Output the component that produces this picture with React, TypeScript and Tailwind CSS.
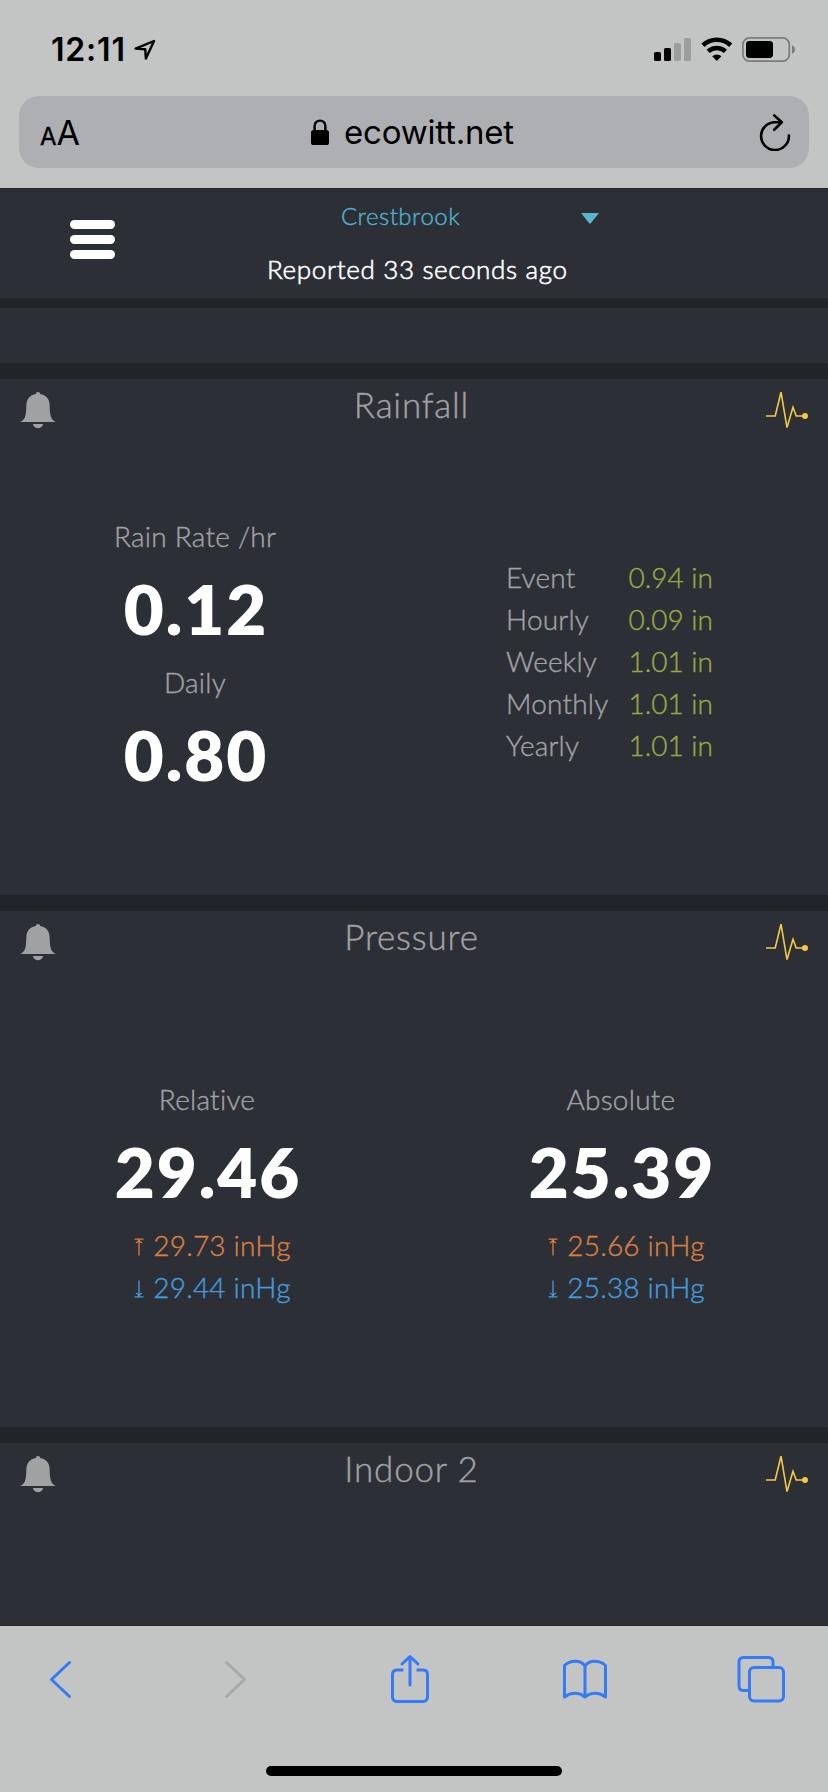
import type { ReactNode } from 'react'

const RAIN_TOTALS = [
  { label: 'Event', value: '0.94 in' },
  { label: 'Hourly', value: '0.09 in' },
  { label: 'Weekly', value: '1.01 in' },
  { label: 'Monthly', value: '1.01 in' },
  { label: 'Yearly', value: '1.01 in' },
]

const PRESSURES = [
  { label: 'Relative', value: '29.46', high: '29.73 inHg', low: '29.44 inHg' },
  { label: 'Absolute', value: '25.39', high: '25.66 inHg', low: '25.38 inHg' },
]

function StatusBar() {
  return (
    <div className="flex h-24 items-start justify-between pl-[51px] pr-[33px] pt-[33px]">
      <div className="flex items-start">
        <span className="w-[83px] text-[32px] font-semibold leading-[33px] tracking-[0.8px]">
          12:11
        </span>
        <svg width="22" height="22" viewBox="0 0 22 22" className="mt-[6px]">
          <path
            d="M1.6 9.6 L20 2 L11.9 19.6 L11.2 10.2 Z"
            fill="none"
            stroke="#000"
            strokeWidth="2.4"
            strokeLinejoin="round"
          />
        </svg>
      </div>
      <div className="flex items-start">
        <svg width="37" height="23" viewBox="0 0 37 23" className="mt-[5px]">
          <rect x="0" y="14" width="7" height="9" rx="1.6" />
          <rect x="10" y="10" width="7" height="13" rx="1.6" />
          <rect x="20" y="5" width="7" height="18" rx="1.6" fill="#9c9e9d" />
          <rect x="30" y="0" width="7" height="23" rx="1.6" fill="#9c9e9d" />
        </svg>
        <svg width="32" height="24" viewBox="0 0 32 24" className="ml-[10px] mt-1">
          <g fill="none" stroke="#000" strokeWidth="4.6">
            <path d="M1.9 8.2 A20.4 20.4 0 0 1 29.7 8.2" />
            <path d="M7.2 14.4 A12.6 12.6 0 0 1 24.4 14.4" />
          </g>
          <path d="M15.8 24 L11.2 19.3 A6.6 6.6 0 0 1 20.4 19.3 Z" />
        </svg>
        <svg width="53" height="25" viewBox="0 0 53 25" className="ml-[9px] mt-1">
          <rect x="0.9" y="0.9" width="46.4" height="23.2" rx="6.5" fill="none" stroke="#7b7d7c" strokeWidth="1.8" />
          <rect x="4" y="4" width="27" height="17" rx="3.4" />
          <path d="M50 8.2 Q53 9.4 53 12.5 Q53 15.6 50 16.8 Z" fill="#7b7d7c" />
        </svg>
      </div>
    </div>
  )
}

function AddressBar() {
  return (
    <div className="mx-[19px] flex h-[72px] items-start rounded-[20px] bg-[#aeafb2]">
      <div className="flex w-[292px] items-baseline pl-[21px]">
        <span className="text-[24px] leading-[72px] [-webkit-text-stroke:0.4px]">A</span>
        <span className="text-[34px] leading-[73px] tracking-[-1px]">A</span>
      </div>
      <svg width="18" height="26" viewBox="0 0 18 26" className="mt-[23px]">
        <rect x="0" y="11" width="18" height="15" rx="2.6" />
        <path d="M3.6 12 V7 a5.4 5.4 0 0 1 10.8 0 V12" fill="none" stroke="#000" strokeWidth="2.4" />
      </svg>
      <span className="ml-[15px] w-[400px] text-[33px] leading-[72px] tracking-[-0.2px]">
        ecowitt.net
      </span>
      <svg width="32" height="38" viewBox="0 0 32 38" className="mt-[17px] ml-[15px]">
        <g fill="none" stroke="#000" strokeWidth="2.6" strokeLinecap="round" strokeLinejoin="round">
          <path d="M22 9.2 H16 A13.9 13.9 0 1 0 29.9 22.6" />
          <path d="M15.2 2.4 L22.8 9.3 L15.2 16.8" />
        </g>
      </svg>
    </div>
  )
}

function BellIcon() {
  return (
    <svg width="36" height="37" viewBox="0 0 36 37" fill="#a0a1a3">
      <path d="M18 0 C19.3 0 20.1 .8 20.2 2 C26 3 29.4 7 29.6 12.5 C29.8 18 29.9 22 31 25 C32 27.4 33.6 29 36 30 H0 C2.4 29 4 27.4 5 25 C6.1 22 6.2 18 6.4 12.5 C6.6 7 10 3 15.8 2 C15.9 .8 16.7 0 18 0 Z" />
      <path d="M12.8 32 H23.2 C22.6 34.4 20.6 36.2 18 36.2 C15.4 36.2 13.4 34.4 12.8 32 Z" />
    </svg>
  )
}

function PulseIcon() {
  return (
    <svg width="42" height="38" viewBox="0 0 42 38">
      <path
        d="M0 25 H9.2 L15 1.2 L21 36.6 L27 16.2 L30.2 25 H39"
        fill="none"
        stroke="#f5c945"
        strokeWidth="1.6"
      />
      <circle cx="39" cy="25" r="3" fill="#f5c945" />
    </svg>
  )
}

function Panel({ title, children, className }: { title: string; children?: ReactNode; className: string }) {
  return (
    <section className={`flex flex-col bg-[#2c2f36] ${className}`}>
      <div className="flex h-[51px] justify-between pl-5 pr-5">
        <div className="w-[42px] pt-[13px]">
          <BellIcon />
        </div>
        <h2 className="mr-[5px] text-[35px] font-light leading-[51px] tracking-[0.8px]">{title}</h2>
        <div className="w-[42px] pt-3">
          <PulseIcon />
        </div>
      </div>
      {children}
    </section>
  )
}

function Reading({ label, value }: { label: string; value: string }) {
  return (
    <>
      <div className="text-[28px] font-light leading-[42px] tracking-[0.25px]">{label}</div>
      <div className="pl-[2px] text-[69px] font-extrabold leading-[104px] tracking-[2px] text-white [-webkit-text-stroke:0]">
        {value}
      </div>
    </>
  )
}

function LimitArrow({ down = false }: { down?: boolean }) {
  return (
    <svg width="10" height="18" viewBox="0 0 10 18" className={down ? 'mr-[9px] mt-[3px] rotate-180' : 'mr-[9px] mt-[3px]'}>
      <path d="M0.5 1.2 H9.5 M5 1.6 V17.5 M1.8 5 Q4.2 4.2 5 2 Q5.8 4.2 8.2 5" fill="none" stroke="currentColor" strokeWidth="1.3" />
    </svg>
  )
}

function Header() {
  return (
    <header className="flex h-[110px] border-t border-[#222529] bg-[#2c2f36]">
      <div className="flex w-[267px] flex-col gap-[6px] pl-[70px] pt-[31px]">
        <div className="h-[9px] w-[45px] rounded-full bg-white" />
        <div className="h-[9px] w-[45px] rounded-full bg-white" />
        <div className="h-[9px] w-[45px] rounded-full bg-white" />
      </div>
      <div className="whitespace-nowrap font-light">
        <div className="flex h-[54px] items-start pl-[74px]">
          <span className="w-[240px] text-[24px] leading-[54px] tracking-[0.5px] text-[#50b2cc]">
            Crestbrook
          </span>
          <svg width="18" height="11" viewBox="0 0 18 11" className="mt-6">
            <path d="M0 0 H18 L10 10 Q9 11 8 10 Z" fill="#5ab4cd" />
          </svg>
        </div>
        <div className="text-[26px] leading-[53px] tracking-[0.65px] text-white [-webkit-text-stroke:0.6px]">
          Reported 33 seconds ago
        </div>
      </div>
    </header>
  )
}

function Toolbar() {
  return (
    <footer className="flex h-[167px] flex-col border-t border-[#222529] bg-[#c3c5c4]">
      <div className="flex h-[140px] items-start pl-[49px] pt-[28px]">
        <svg width="24" height="52" viewBox="0 0 24 52" fill="none" stroke="#357af6" strokeWidth="3" strokeLinecap="round" strokeLinejoin="round">
          <path d="M20.5 8.5 L2.5 25.5 L20.5 42.5" />
        </svg>
        <svg width="24" height="52" viewBox="0 0 24 52" fill="none" stroke="#a8a9a9" strokeWidth="3" strokeLinecap="round" strokeLinejoin="round" className="ml-[150px]">
          <path d="M3.5 8.5 L21.5 25.5 L3.5 42.5" />
        </svg>
        <svg width="40" height="52" viewBox="0 0 40 52" fill="none" stroke="#357af6" strokeWidth="3" strokeLinecap="round" strokeLinejoin="round" className="ml-[143px]">
          <path d="M13.4 16 H7 Q2.5 16 2.5 20.5 V42.5 Q2.5 47.5 7 47.5 H33 Q37.5 47.5 37.5 42.5 V20.5 Q37.5 16 33 16 H26.6" strokeLinecap="butt" />
          <path d="M20 31 V3 M12 10 L20 2.5 L28 10" />
        </svg>
        <svg width="44" height="52" viewBox="0 0 44 52" fill="none" stroke="#357af6" strokeWidth="3" strokeLinejoin="round" className="ml-[133px]">
          <path d="M22 12 C17.5 5.8 7.5 6 1.5 11.5 V43 C8 38 16 38 22 43 C28 38 36 38 42.5 43 V11.5 C36.5 6 26.5 5.8 22 12 Z M22 12 V43" />
        </svg>
        <svg width="48" height="52" viewBox="0 0 48 52" fill="none" stroke="#357af6" strokeWidth="3" className="ml-[130px]">
          <path d="M11.8 36.5 H6.5 Q2 36.5 2 32 V8 Q2 3.5 6.5 3.5 H31.5 Q36 3.5 36 8 V13.2" />
          <rect x="12.5" y="13.5" width="34" height="33.5" rx="4.5" />
        </svg>
      </div>
      <div className="mx-auto h-[10px] w-[296px] rounded-full bg-black" />
    </footer>
  )
}

function App() {
  return (
    <div className="flex h-[1792px] w-[828px] flex-col overflow-hidden bg-[#212428]">
      <div className="h-[188px] bg-[#c3c5c4] font-['Inter',sans-serif] text-black">
        <StatusBar />
        <AddressBar />
      </div>
      <main className="flex grow flex-col font-['Lato',sans-serif] text-[#a0a1a3] [-webkit-text-stroke:0.4px]">
        <Header />
        <div className="mt-[10px] h-[55px] bg-[#2c2f36]" />

        <Panel title="Rainfall" className="mt-4 h-[516px]">
          <div className="flex grow items-center pb-[3px] pr-6">
            <div className="w-1/2 pr-3 text-center">
              <Reading label="Rain Rate /hr" value="0.12" />
              <Reading label="Daily" value="0.80" />
            </div>
            <div className="w-1/2 pl-[104px]">
              {RAIN_TOTALS.map((row) => (
                <div
                  key={row.label}
                  className="flex w-[207px] justify-between whitespace-nowrap text-[28px] font-light leading-[42px] tracking-[0.2px]"
                >
                  <span>{row.label}</span>
                  <span className="tracking-normal text-[#95a844]">{row.value}</span>
                </div>
              ))}
            </div>
          </div>
        </Panel>

        <Panel title="Pressure" className="mt-4 h-[516px]">
          <div className="flex grow items-center pb-[3px]">
            {PRESSURES.map((p) => (
              <div key={p.label} className="w-1/2 text-center">
                <Reading label={p.label} value={p.value} />
                <div className="pl-[11px] text-[28px] font-light leading-[42px] tracking-[0.2px]">
                  <div className="flex items-center justify-center text-[#d97e45]">
                    <LimitArrow />
                    {p.high}
                  </div>
                  <div className="flex items-center justify-center text-[#459bdb]">
                    <LimitArrow down />
                    {p.low}
                  </div>
                </div>
              </div>
            ))}
          </div>
        </Panel>

        <Panel title="Indoor 2" className="mt-4 h-[182px]" />
      </main>
      <Toolbar />
    </div>
  )
}

export default App
